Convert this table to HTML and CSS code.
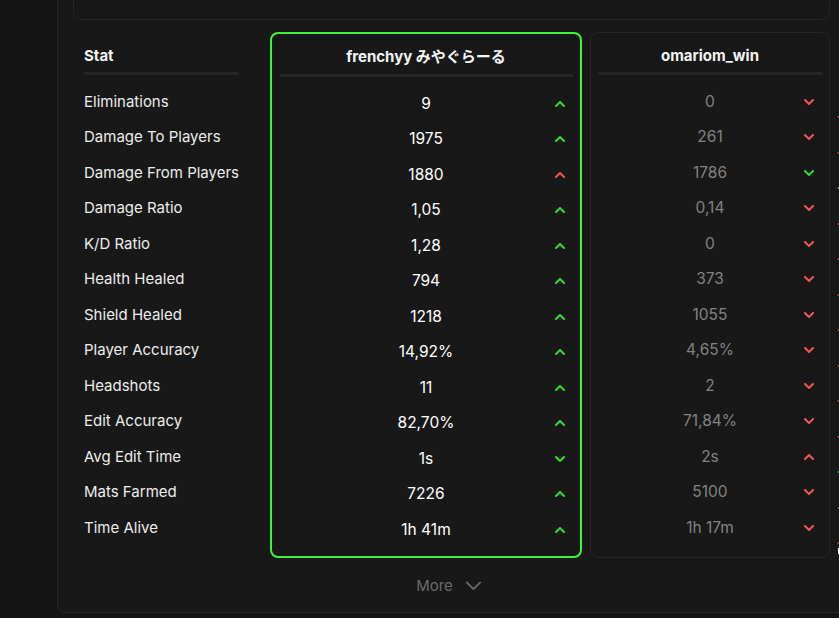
FILE: index.html
```html
<!DOCTYPE html>
<html lang="en">
<head>
<meta charset="utf-8">
<title>Stats comparison</title>
<link rel="stylesheet" href="styles.css">
</head>
<body>
<div class="page">
  <div class="outer">
    <div class="topcard"></div>
    <div class="table">
      <div class="col stat">
        <div class="head">Stat</div>
        <div class="rule"></div>
        <div class="rows">
          <div class="row">Eliminations</div>
          <div class="row">Damage To Players</div>
          <div class="row">Damage From Players</div>
          <div class="row">Damage Ratio</div>
          <div class="row">K/D Ratio</div>
          <div class="row">Health Healed</div>
          <div class="row">Shield Healed</div>
          <div class="row">Player Accuracy</div>
          <div class="row">Headshots</div>
          <div class="row">Edit Accuracy</div>
          <div class="row">Avg Edit Time</div>
          <div class="row">Mats Farmed</div>
          <div class="row">Time Alive</div>
        </div>
      </div>

      <div class="col player best">
        <div class="head">frenchyy みやぐらーる</div>
        <div class="rule"></div>
        <div class="rows">
          <div class="row"><span class="val">9</span><svg class="chev green" viewBox="0 0 10 6"><polyline points="1,5 5,1 9,5"/></svg></div>
          <div class="row"><span class="val">1975</span><svg class="chev green" viewBox="0 0 10 6"><polyline points="1,5 5,1 9,5"/></svg></div>
          <div class="row"><span class="val">1880</span><svg class="chev red" viewBox="0 0 10 6"><polyline points="1,5 5,1 9,5"/></svg></div>
          <div class="row"><span class="val">1,05</span><svg class="chev green" viewBox="0 0 10 6"><polyline points="1,5 5,1 9,5"/></svg></div>
          <div class="row"><span class="val">1,28</span><svg class="chev green" viewBox="0 0 10 6"><polyline points="1,5 5,1 9,5"/></svg></div>
          <div class="row"><span class="val">794</span><svg class="chev green" viewBox="0 0 10 6"><polyline points="1,5 5,1 9,5"/></svg></div>
          <div class="row"><span class="val">1218</span><svg class="chev green" viewBox="0 0 10 6"><polyline points="1,5 5,1 9,5"/></svg></div>
          <div class="row"><span class="val">14,92%</span><svg class="chev green" viewBox="0 0 10 6"><polyline points="1,5 5,1 9,5"/></svg></div>
          <div class="row"><span class="val">11</span><svg class="chev green" viewBox="0 0 10 6"><polyline points="1,5 5,1 9,5"/></svg></div>
          <div class="row"><span class="val">82,70%</span><svg class="chev green" viewBox="0 0 10 6"><polyline points="1,5 5,1 9,5"/></svg></div>
          <div class="row"><span class="val">1s</span><svg class="chev green" viewBox="0 0 10 6"><polyline points="1,1 5,5 9,1"/></svg></div>
          <div class="row"><span class="val">7226</span><svg class="chev green" viewBox="0 0 10 6"><polyline points="1,5 5,1 9,5"/></svg></div>
          <div class="row"><span class="val">1h 41m</span><svg class="chev green" viewBox="0 0 10 6"><polyline points="1,5 5,1 9,5"/></svg></div>
        </div>
      </div>

      <div class="col player other">
        <div class="head">omariom_win</div>
        <div class="rule"></div>
        <div class="rows">
          <div class="row"><span class="val">0</span><svg class="chev red" viewBox="0 0 10 6"><polyline points="1,1 5,5 9,1"/></svg></div>
          <div class="row"><span class="val">261</span><svg class="chev red" viewBox="0 0 10 6"><polyline points="1,1 5,5 9,1"/></svg></div>
          <div class="row"><span class="val">1786</span><svg class="chev green" viewBox="0 0 10 6"><polyline points="1,1 5,5 9,1"/></svg></div>
          <div class="row"><span class="val">0,14</span><svg class="chev red" viewBox="0 0 10 6"><polyline points="1,1 5,5 9,1"/></svg></div>
          <div class="row"><span class="val">0</span><svg class="chev red" viewBox="0 0 10 6"><polyline points="1,1 5,5 9,1"/></svg></div>
          <div class="row"><span class="val">373</span><svg class="chev red" viewBox="0 0 10 6"><polyline points="1,1 5,5 9,1"/></svg></div>
          <div class="row"><span class="val">1055</span><svg class="chev red" viewBox="0 0 10 6"><polyline points="1,1 5,5 9,1"/></svg></div>
          <div class="row"><span class="val">4,65%</span><svg class="chev red" viewBox="0 0 10 6"><polyline points="1,1 5,5 9,1"/></svg></div>
          <div class="row"><span class="val">2</span><svg class="chev red" viewBox="0 0 10 6"><polyline points="1,1 5,5 9,1"/></svg></div>
          <div class="row"><span class="val">71,84%</span><svg class="chev red" viewBox="0 0 10 6"><polyline points="1,1 5,5 9,1"/></svg></div>
          <div class="row"><span class="val">2s</span><svg class="chev red" viewBox="0 0 10 6"><polyline points="1,5 5,1 9,5"/></svg></div>
          <div class="row"><span class="val">5100</span><svg class="chev red" viewBox="0 0 10 6"><polyline points="1,1 5,5 9,1"/></svg></div>
          <div class="row"><span class="val">1h 17m</span><svg class="chev red" viewBox="0 0 10 6"><polyline points="1,1 5,5 9,1"/></svg></div>
        </div>
      </div>

      <div class="col clipped">
        <div class="ticks">
          <span class="tick r"></span><span class="tick r"></span><span class="tick g"></span>
          <span class="tick r"></span><span class="tick r"></span><span class="tick r"></span>
          <span class="tick r"></span><span class="tick r"></span><span class="tick r"></span>
          <span class="tick r"></span><span class="tick g"></span><span class="tick r"></span>
          <span class="tick r"></span>
          <span class="corner"></span>
        </div>
      </div>
    </div>

    <div class="more">
      <span>More</span>
      <svg class="more-chev" viewBox="0 0 18 10"><polyline points="1,1 9,9 17,1"/></svg>
    </div>
  </div>
</div>
</body>
</html>
```

FILE: styles.css
```css
* { box-sizing: border-box; }

html, body {
  margin: 0;
  padding: 0;
  width: 839px;
  height: 618px;
  overflow: hidden;
  background: #141414;
  font-family: Inter, "Noto Sans CJK JP", sans-serif;
  font-size: 15px;
  color: #e9e9e9;
}

.page {
  padding-left: 57px;
}

.outer {
  width: 1000px;
  margin-top: -40px;
  height: 653px;
  border: 1px solid #262626;
  border-radius: 8px;
  background: #181818;
  padding: 15px 15px 0 15px;
}

.topcard {
  width: 757px;
  height: 44px;
  border: 1px solid #262626;
  border-radius: 8px;
  background: #181818;
}

.table {
  display: flex;
  align-items: stretch;
  margin-top: 12px;
  padding-left: 11px;
}

.col {
  display: flex;
  flex-direction: column;
  flex: none;
}

.head {
  padding: 12px 0 5px;
  line-height: 22px;
  font-weight: 700;
  color: #f4f4f4;
  font-size: 15px;
  white-space: nowrap;
}

.rule {
  height: 3px;
  background: #262626;
}

.rows {
  padding-top: 9px;
}

.row {
  height: 35.5px;
  display: flex;
  align-items: center;
  line-height: 20px;
  white-space: nowrap;
}

/* stat labels */
.stat {
  width: 154px;
  margin-right: 32px;
  border-top: 1px solid transparent;
}
.stat .head { padding-top: 12px; padding-bottom: 5px; }
.stat .row { font-weight: 400; color: #ededed; letter-spacing: 0; }

/* player columns */
.player {
  border-radius: 8px;
  background: #181818;
}
.player .head { text-align: center; }
.player .row {
  display: grid;
  grid-template-columns: 1fr auto 1fr;
  align-items: center;
}
.player .val {
  grid-column: 2;
  font-weight: 400;
  font-size: 15.5px;
}
.chev {
  grid-column: 3;
  justify-self: end;
  margin-right: 15px;
  width: 10px;
  height: 6px;
  fill: none;
  stroke-width: 2;
  stroke-linecap: square;
  stroke-linejoin: miter;
}
.chev.green { stroke: #2fdc2f; }
.chev.red { stroke: #ef5656; }

.best {
  width: 312px;
  border: 2px solid #3df53d;
  margin-right: 8px;
}
.best .head { padding-bottom: 6px; }
.best .rule { margin: 0 7px 0 8px; }
.best .rows { padding-bottom: 8px; }
.best .val { color: #ffffff; }

.other {
  width: 240px;
  border: 1px solid #262626;
  margin-right: 8px;
}
.other .rule { margin: 0 7px; }
.other .rows { padding-bottom: 10px; }
.other .val { color: #828282; }

/* clipped next column at the right edge */
.clipped {
  width: 40px;
}
.ticks {
  display: flex;
  flex-direction: column;
  padding-top: 84px;
}
.tick {
  display: block;
  width: 4px;
  height: 2px;
  margin-bottom: 33.5px;
}
.tick.r { background: #ef5656; }
.tick.g { background: #2fdc2f; }
.tick:nth-child(13) { margin-bottom: 4px; }
.corner {
  display: block;
  width: 4px;
  height: 6px;
  border-top: 1px solid #ffffff;
  border-left: 1px solid #ffffff;
}

/* more */
.more {
  width: 752px;
  margin-top: 17px;
  display: flex;
  justify-content: center;
  align-items: center;
  gap: 12px;
  line-height: 22px;
  color: #6b6b6b;
  font-size: 15px;
}
.more-chev {
  width: 17px;
  height: 9px;
  fill: none;
  stroke: #6b6b6b;
  stroke-width: 2;
}
```
